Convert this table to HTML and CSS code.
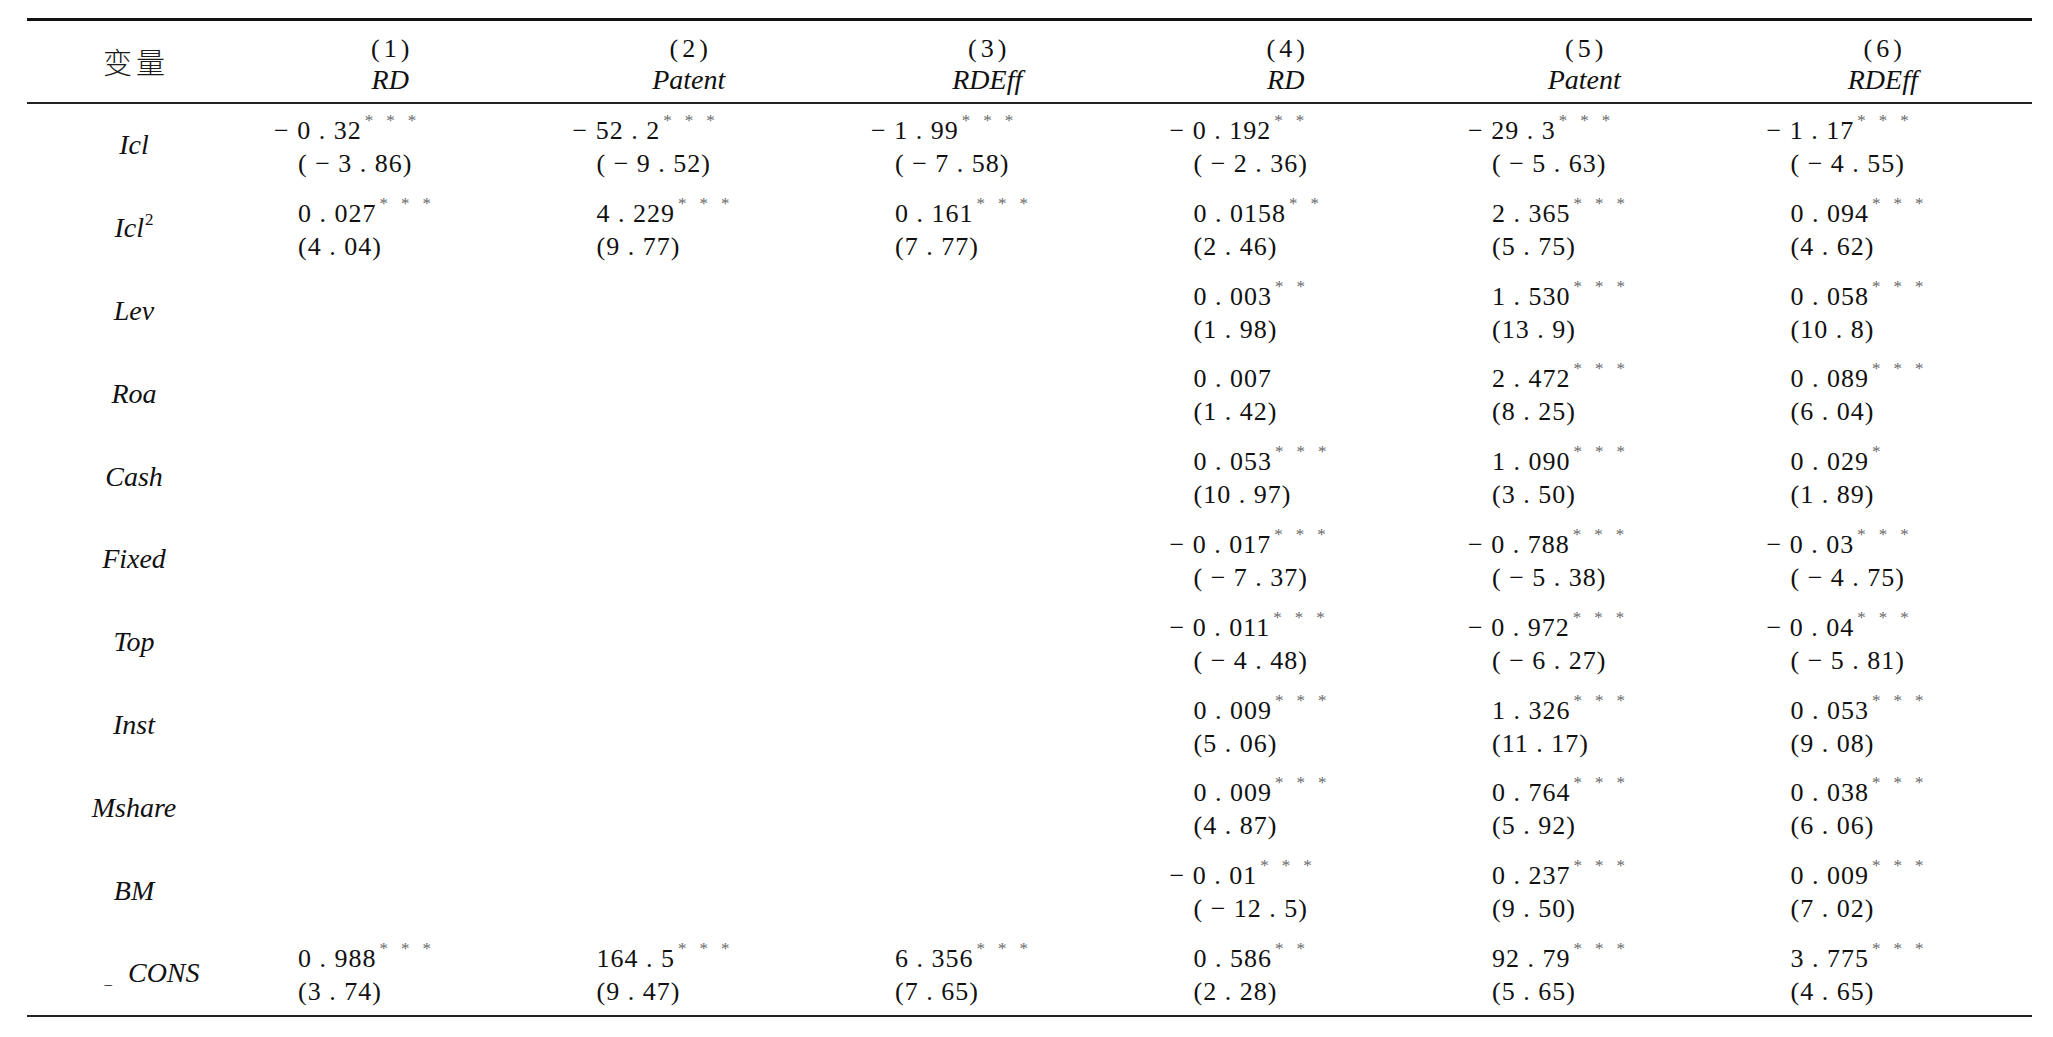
FILE: index.html
```html
<!DOCTYPE html>
<html lang="zh-CN">
<head>
<meta charset="utf-8">
<title>回归结果</title>
<link rel="stylesheet" href="styles.css">
</head>
<body>
<table class="reg">
  <colgroup>
    <col class="c-lab">
    <col class="c-d"><col class="c-d"><col class="c-d"><col class="c-d"><col class="c-d"><col class="c-d">
  </colgroup>
  <thead>
    <tr>
      <th class="lab"><span class="zh">变量</span></th>
      <th><div class="no">(1)</div><div class="nm">RD</div></th>
      <th><div class="no">(2)</div><div class="nm">Patent</div></th>
      <th><div class="no">(3)</div><div class="nm">RDEff</div></th>
      <th><div class="no">(4)</div><div class="nm">RD</div></th>
      <th><div class="no">(5)</div><div class="nm">Patent</div></th>
      <th><div class="no">(6)</div><div class="nm">RDEff</div></th>
    </tr>
  </thead>
  <tbody>
    <tr>
      <td class="lab">Icl</td>
      <td><div><span class="m">− </span>0 . 32<span class="s">***</span></div><div>( − 3 . 86)</div></td>
      <td><div><span class="m">− </span>52 . 2<span class="s">***</span></div><div>( − 9 . 52)</div></td>
      <td><div><span class="m">− </span>1 . 99<span class="s">***</span></div><div>( − 7 . 58)</div></td>
      <td><div><span class="m">− </span>0 . 192<span class="s">**</span></div><div>( − 2 . 36)</div></td>
      <td><div><span class="m">− </span>29 . 3<span class="s">***</span></div><div>( − 5 . 63)</div></td>
      <td><div><span class="m">− </span>1 . 17<span class="s">***</span></div><div>( − 4 . 55)</div></td>
    </tr>
    <tr>
      <td class="lab">Icl<sup class="sq">2</sup></td>
      <td><div>0 . 027<span class="s">***</span></div><div>(4 . 04)</div></td>
      <td><div>4 . 229<span class="s">***</span></div><div>(9 . 77)</div></td>
      <td><div>0 . 161<span class="s">***</span></div><div>(7 . 77)</div></td>
      <td><div>0 . 0158<span class="s">**</span></div><div>(2 . 46)</div></td>
      <td><div>2 . 365<span class="s">***</span></div><div>(5 . 75)</div></td>
      <td><div>0 . 094<span class="s">***</span></div><div>(4 . 62)</div></td>
    </tr>
    <tr>
      <td class="lab">Lev</td>
      <td></td><td></td><td></td>
      <td><div>0 . 003<span class="s">**</span></div><div>(1 . 98)</div></td>
      <td><div>1 . 530<span class="s">***</span></div><div>(13 . 9)</div></td>
      <td><div>0 . 058<span class="s">***</span></div><div>(10 . 8)</div></td>
    </tr>
    <tr>
      <td class="lab">Roa</td>
      <td></td><td></td><td></td>
      <td><div>0 . 007</div><div>(1 . 42)</div></td>
      <td><div>2 . 472<span class="s">***</span></div><div>(8 . 25)</div></td>
      <td><div>0 . 089<span class="s">***</span></div><div>(6 . 04)</div></td>
    </tr>
    <tr>
      <td class="lab">Cash</td>
      <td></td><td></td><td></td>
      <td><div>0 . 053<span class="s">***</span></div><div>(10 . 97)</div></td>
      <td><div>1 . 090<span class="s">***</span></div><div>(3 . 50)</div></td>
      <td><div>0 . 029<span class="s">*</span></div><div>(1 . 89)</div></td>
    </tr>
    <tr>
      <td class="lab">Fixed</td>
      <td></td><td></td><td></td>
      <td><div><span class="m">− </span>0 . 017<span class="s">***</span></div><div>( − 7 . 37)</div></td>
      <td><div><span class="m">− </span>0 . 788<span class="s">***</span></div><div>( − 5 . 38)</div></td>
      <td><div><span class="m">− </span>0 . 03<span class="s">***</span></div><div>( − 4 . 75)</div></td>
    </tr>
    <tr>
      <td class="lab">Top</td>
      <td></td><td></td><td></td>
      <td><div><span class="m">− </span>0 . 011<span class="s">***</span></div><div>( − 4 . 48)</div></td>
      <td><div><span class="m">− </span>0 . 972<span class="s">***</span></div><div>( − 6 . 27)</div></td>
      <td><div><span class="m">− </span>0 . 04<span class="s">***</span></div><div>( − 5 . 81)</div></td>
    </tr>
    <tr>
      <td class="lab">Inst</td>
      <td></td><td></td><td></td>
      <td><div>0 . 009<span class="s">***</span></div><div>(5 . 06)</div></td>
      <td><div>1 . 326<span class="s">***</span></div><div>(11 . 17)</div></td>
      <td><div>0 . 053<span class="s">***</span></div><div>(9 . 08)</div></td>
    </tr>
    <tr>
      <td class="lab">Mshare</td>
      <td></td><td></td><td></td>
      <td><div>0 . 009<span class="s">***</span></div><div>(4 . 87)</div></td>
      <td><div>0 . 764<span class="s">***</span></div><div>(5 . 92)</div></td>
      <td><div>0 . 038<span class="s">***</span></div><div>(6 . 06)</div></td>
    </tr>
    <tr>
      <td class="lab">BM</td>
      <td></td><td></td><td></td>
      <td><div><span class="m">− </span>0 . 01<span class="s">***</span></div><div>( − 12 . 5)</div></td>
      <td><div>0 . 237<span class="s">***</span></div><div>(9 . 50)</div></td>
      <td><div>0 . 009<span class="s">***</span></div><div>(7 . 02)</div></td>
    </tr>
    <tr class="last">
      <td class="lab cons"><span class="us">_</span>CONS</td>
      <td><div>0 . 988<span class="s">***</span></div><div>(3 . 74)</div></td>
      <td><div>164 . 5<span class="s">***</span></div><div>(9 . 47)</div></td>
      <td><div>6 . 356<span class="s">***</span></div><div>(7 . 65)</div></td>
      <td><div>0 . 586<span class="s">**</span></div><div>(2 . 28)</div></td>
      <td><div>92 . 79<span class="s">***</span></div><div>(5 . 65)</div></td>
      <td><div>3 . 775<span class="s">***</span></div><div>(4 . 65)</div></td>
    </tr>
  </tbody>
</table>
</body>
</html>
```

FILE: styles.css
```css
html, body {
  background: #ffffff;
}

body {
  margin: 0;
  padding: 18px 0 0 27px;
  color: #111111;
  font-family: "Liberation Serif", "Times New Roman", "Noto Sans CJK SC", serif;
}

.reg {
  border-collapse: separate;
  border-spacing: 0;
  table-layout: fixed;
  width: 2005px;
}

.c-lab {
  width: 214px;
}

.c-d {
  width: 298.5px;
}

/* header */
.reg thead th {
  border-top: 3px solid #111111;
  border-bottom: 2px solid #222222;
  padding: 11.7px 0 7.3px 0;
  font-weight: normal;
  text-align: center;
  vertical-align: top;
  line-height: 31px;
  white-space: nowrap;
}

.reg thead th.lab {
  vertical-align: middle;
  padding-top: 14px;
  padding-bottom: 7px;
}

.zh {
  font-family: "Noto Sans CJK SC", sans-serif;
  font-size: 29px;
  font-weight: 300;
  letter-spacing: 4px;
  padding-left: 4px;
  color: #1a1a1a;
}

.no {
  font-size: 26px;
  letter-spacing: 4px;
  padding-left: 4px;
}

.nm {
  font-size: 28px;
  font-style: italic;
}

/* body */
.reg tbody td {
  padding: 10px 0 6.8px 57px;
  vertical-align: top;
  font-size: 26px;
  line-height: 33px;
  letter-spacing: 1px;
  white-space: nowrap;
  text-align: left;
}

.reg tbody td > div {
  height: 33px;
}

.reg tbody td.lab {
  padding: 0;
  vertical-align: middle;
  text-align: center;
  font-size: 28px;
  font-style: italic;
  letter-spacing: 0;
  line-height: 32px;
}

.reg tbody tr.last td {
  border-bottom: 2px solid #222222;
}

.reg tbody td.cons {
  padding-left: 36px;
}

.m {
  margin-left: -24px;
}

.s {
  position: relative;
  top: -13px;
  margin-left: 3px;
  font-size: 17px;
  line-height: 0;
  letter-spacing: 13px;
  color: #6a6a6a;
}

.sq {
  font-size: 17px;
  font-style: normal;
  vertical-align: 12px;
  line-height: 0;
  margin-left: 1px;
}

.us {
  font-style: normal;
  font-size: 15px;
  line-height: 0;
  margin-right: 16px;
  position: relative;
  top: 2px;
}
```
